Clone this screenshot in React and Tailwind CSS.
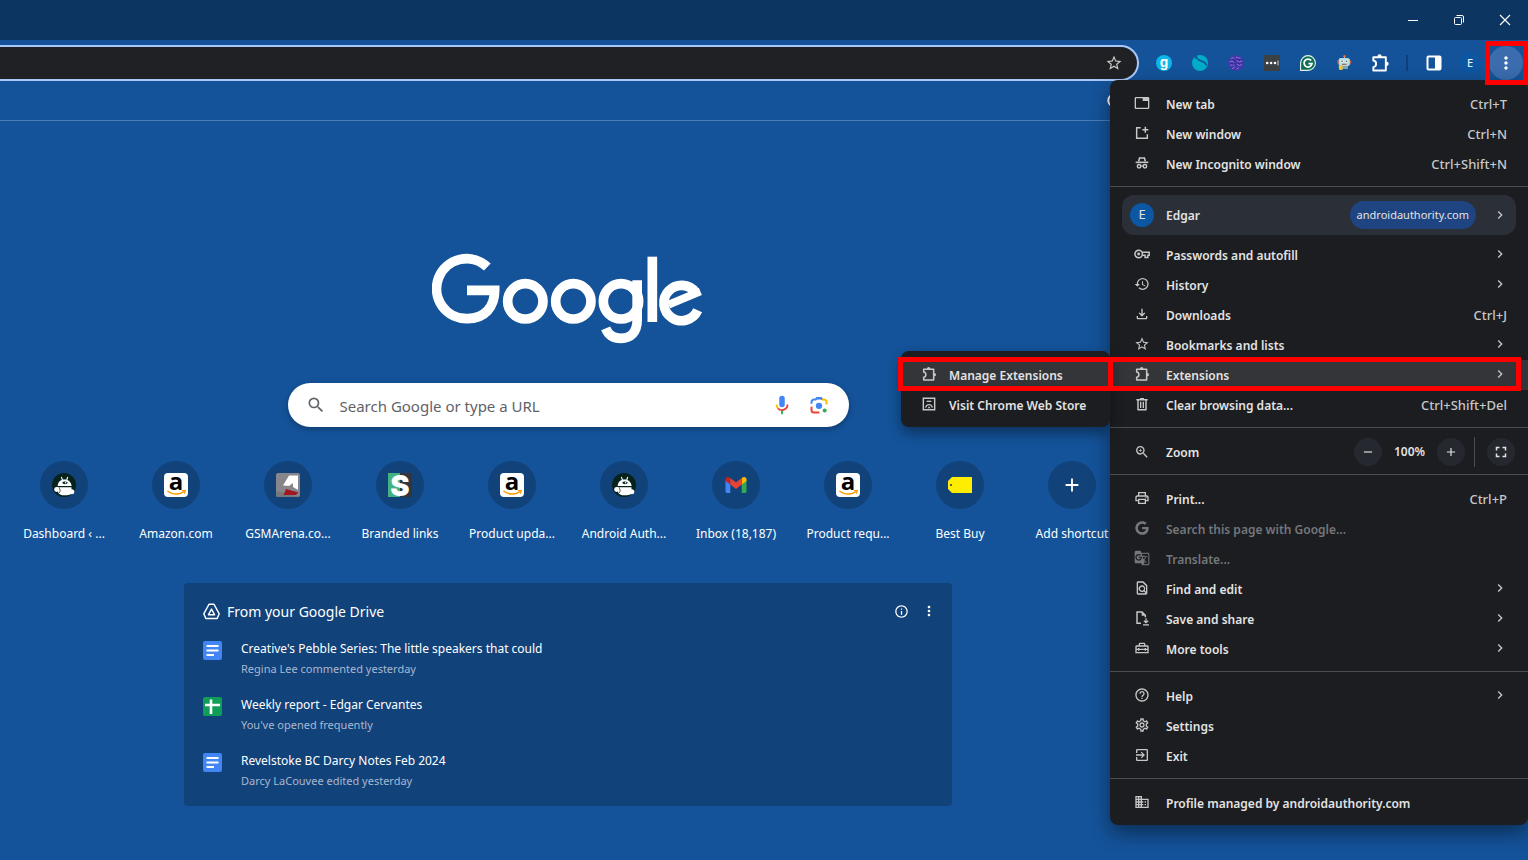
import React from "react";
import {
  MdTab,
  MdHistory,
  MdOutlineFileDownload,
  MdStarBorder,
  MdZoomIn,
  MdOutlinePrint,
  MdGTranslate,
  MdOutlineFindInPage,
  MdOutlineHomeRepairService,
  MdHelpOutline,
  MdOutlineSettings,
  MdExitToApp,
  MdDomain,
  MdChevronRight,
  MdSearch,
  MdMoreVert,
  MdInfoOutline,
  MdFullscreen,
  MdAdd,
  MdRemove,
} from "react-icons/md";
import { FaGoogle } from "react-icons/fa";

/* ---------- icons ---------- */

function Svg({ size = 16, box = "0 0 24 24", children }) {
  return (
    <svg width={size} height={size} viewBox={box} fill="none" aria-hidden="true" className="shrink-0 overflow-visible">
      {children}
    </svg>
  );
}

function Puzzle({ size = 16 }) {
  return (
    <Svg size={size}>
      <path
        d="M4 5H19V21H4V17C6.200 16.700 7.300 15 7.300 13S6.200 9.300 4 9Z"
        stroke="currentColor"
        strokeWidth="2.300"
        strokeLinejoin="round"
      />
      <path d="M9 5V4A2.500 2.500 0 0 1 14 4V5ZM19 10.500H20A2.500 2.500 0 0 1 20 15.500H19Z" fill="currentColor" />
    </Svg>
  );
}

function NewWindow() {
  return (
    <Svg>
      <path d="M10 4H4V20H20V14M17 2.500V11.500M12.500 7H21.500" stroke="currentColor" strokeWidth="2.200" />
    </Svg>
  );
}

function Incognito() {
  return (
    <Svg>
      <path d="M7 9.500 8.300 4.600H15.700L17 9.500" stroke="currentColor" strokeWidth="2.400" />
      <path d="M2.500 11H21.500" stroke="currentColor" strokeWidth="2.400" />
      <circle cx="7.600" cy="17" r="2.600" stroke="currentColor" strokeWidth="2.200" />
      <circle cx="16.400" cy="17" r="2.600" stroke="currentColor" strokeWidth="2.200" />
      <path d="M10.200 16.500H13.800" stroke="currentColor" strokeWidth="1.800" />
    </Svg>
  );
}

function Key() {
  return (
    <Svg>
      <circle cx="7" cy="12" r="5.600" stroke="currentColor" strokeWidth="2.200" />
      <circle cx="7" cy="12" r="2.200" fill="currentColor" />
      <path d="M12.200 9.500H22.800V14H20.800V17.400H16.600V14H12.200" stroke="currentColor" strokeWidth="2.200" />
    </Svg>
  );
}

function Trash() {
  return (
    <Svg>
      <path d="M3.500 5.500H20.500M9 4H15" stroke="currentColor" strokeWidth="2.200" />
      <path d="M6 6V20.500H18V6" stroke="currentColor" strokeWidth="2.200" strokeLinejoin="round" />
      <path d="M10 8.500V18M14 8.500V18" stroke="currentColor" strokeWidth="2" />
    </Svg>
  );
}

function SaveShare() {
  return (
    <Svg>
      <path d="M10.500 20H4.500V3H12L17 8V11" stroke="currentColor" strokeWidth="2.200" />
      <path d="M11.500 3V8.500H17Z" fill="currentColor" />
      <path d="M18 12.500V19M14.800 16.200 18 19.200 21.200 16.200M13.500 22.400H22.500" stroke="currentColor" strokeWidth="1.800" />
    </Svg>
  );
}

function WebStore() {
  return (
    <Svg>
      <path d="M3.500 3.500H20.500V20.500H3.500Z" stroke="currentColor" strokeWidth="2.200" />
      <path d="M8.500 8H15.500" stroke="currentColor" strokeWidth="2" />
      <path d="M7 17.500C7.500 14.500 9 13 12 13S16.500 14.500 17 17.500" stroke="currentColor" strokeWidth="1.800" />
      <path d="M10 18.500 12 15.500 14.500 18.500Z" fill="currentColor" />
    </Svg>
  );
}

function DriveMark() {
  return (
    <Svg size={17} box="1 1 22 22">
      <path
        d="M8.800 2.600H15.200L22 15 19.300 21H4.700L2 15Z"
        stroke="currentColor"
        strokeWidth="1.900"
        strokeLinejoin="round"
      />
      <path d="M12 8.800 16 16.200H8Z" stroke="currentColor" strokeWidth="1.900" strokeLinejoin="round" />
    </Svg>
  );
}

function DocFile() {
  return (
    <Svg size={19} box="0 0 19 19">
      <rect width="19" height="19" rx="2" fill="#4285f4" />
      <path d="M3.500 5H15.500M3.500 9.500H15.500M3.500 14H11" stroke="#fff" strokeWidth="2" />
    </Svg>
  );
}

function SheetFile() {
  return (
    <Svg size={19} box="0 0 19 19">
      <rect width="19" height="19" rx="2" fill="#0f9d58" />
      <path d="M2 8H17M8 2.500V17" stroke="#fff" strokeWidth="2.600" />
    </Svg>
  );
}

function Wordmark() {
  return (
    <svg width="272" height="91" viewBox="36 36 816 273" fill="none" role="img" aria-label="Google">
      <g stroke="#fff" strokeWidth="29">
        <path d="M202 78A90 90 0 1 0 142 233C195 233 224 197 224 148H141" />
        <circle cx="316" cy="181" r="53" />
        <circle cx="460" cy="181" r="53" />
        <circle cx="603" cy="181" r="53" />
        <path d="M651.500 118V236C651.500 274 632 292 603 292C580 292 565 282 557 262" />
        <path d="M697 47V243" />
        <path d="M833 208A53 53 0 1 1 827 154" />
        <path d="M841 151 746 191" strokeWidth="24" />
      </g>
    </svg>
  );
}

function Mic() {
  return (
    <Svg size={22}>
      <rect x="9" y="2" width="6" height="12.500" rx="3" fill="#4285f4" />
      <path d="M6 11.500A6 6 0 0 0 7.800 15.800" stroke="#fbbc04" strokeWidth="2" />
      <path d="M7.600 15.600A6 6 0 0 0 18 11.500" stroke="#ea4335" strokeWidth="2" />
      <path d="M12 18V22" stroke="#34a853" strokeWidth="2" />
    </Svg>
  );
}

function Lens() {
  return (
    <Svg size={20}>
      <path d="M3 10.500V8.500A3 3 0 0 1 6 5.500H8L9.500 3.500H14.500L16 5.500" stroke="#4285f4" strokeWidth="2.400" />
      <path d="M9 3.500H15V5.500H9Z" fill="#4285f4" />
      <path d="M15.500 5.500H18A3 3 0 0 1 21 8.500V11.500" stroke="#fbbc04" strokeWidth="2.400" />
      <path d="M3 14V18A3 3 0 0 0 6 21H12.500" stroke="#ea4335" strokeWidth="2.400" />
      <circle cx="12" cy="13" r="3.800" fill="#4285f4" />
      <circle cx="18.800" cy="18.500" r="2.400" fill="#34a853" />
    </Svg>
  );
}

/* ---------- shortcut favicons ---------- */

function AmazonFav() {
  return (
    <span className="flex size-6 items-center justify-center rounded bg-white">
      <Svg size={24}>
        <text x="12" y="16.500" textAnchor="middle" fontSize="24" fontWeight="700" fontFamily="Open Sans" fill="#000">
          a
        </text>
        <path d="M3.500 18C8.500 21.900 15 21.900 20 18.600" stroke="#ff9900" strokeWidth="1.500" />
        <path d="M18 17.600 21.200 17.600 20.400 20.600" stroke="#ff9900" strokeWidth="1.200" />
      </Svg>
    </span>
  );
}

function AndroidFav() {
  return (
    <Svg size={24}>
      <circle cx="12" cy="12" r="12" fill="#06221b" />
      <path d="M5.600 13C6 8.800 8.500 6.500 12.500 6.500S19 9 19.600 13Z" fill="#fff" />
      <path d="M9.300 4 10.500 7M15.700 4 14.700 7" stroke="#fff" strokeWidth="1.100" />
      <ellipse cx="13" cy="9.800" rx="2.700" ry="1.400" fill="#06221b" />
      <circle cx="13.600" cy="9.800" r=".8" fill="#fff" />
      <path d="M4 14.300H19.500V19C21 22 15 22.300 13 22.300 9 22.300 6.500 21.500 6 19Z" fill="#fff" />
      <circle cx="4.600" cy="16.500" r="2.400" fill="#fff" />
      <circle cx="19.800" cy="18.800" r="2.500" fill="#fff" />
      <path d="M7.300 14.500 8.300 18 7 20" stroke="#06221b" strokeWidth=".7" />
    </Svg>
  );
}

function ArenaFav() {
  return (
    <Svg size={24}>
      <rect width="24" height="24" rx="2" fill="#87878b" />
      <path d="M0 18 24 24H2A2 2 0 0 1 0 22Z" fill="#77777c" />
      <path d="M13 2.500H22V17L17 14V10L13 13 7 12.500Z" fill="#fff" />
      <path d="M10 16 22.500 19.500 20 22H7.500Z" fill="#a11620" />
    </Svg>
  );
}

function BrandFav() {
  return (
    <Svg size={24}>
      <rect width="12" height="24" fill="#45b083" />
      <rect x="12" width="12" height="24" fill="#33373d" />
      <text x="12" y="22.500" textAnchor="middle" fontSize="29" fontWeight="900" fontFamily="Inter" fill="#fff">
        S
      </text>
    </Svg>
  );
}

function GmailFav() {
  return (
    <Svg size={24}>
      <path d="M1.500 7V18.500A1.500 1.500 0 0 0 3 20H6.300V10.500Z" fill="#4285f4" />
      <path d="M22.500 7V18.500A1.500 1.500 0 0 1 21 20H17.700V10.500Z" fill="#34a853" />
      <path d="M1.500 6.500C1.500 4 4 3.300 6.300 5V11.600L1.500 8Z" fill="#c5221f" />
      <path d="M22.500 6.500C22.500 4 20 3.300 17.700 5V11.600L22.500 8Z" fill="#fbbc04" />
      <path d="M6.300 5 12 9.400 17.700 5V11.600L12 15.900 6.300 11.600Z" fill="#ea4335" />
    </Svg>
  );
}

function TagFav() {
  return (
    <Svg size={24}>
      <path d="M4 4H24V20H4L0 16V8Z" fill="#ffed00" />
      <circle cx="3" cy="12" r="1" fill="#11396a" />
    </Svg>
  );
}

/* ---------- window chrome ---------- */

function WindowControls() {
  const cls = "flex h-10 w-[46px] items-center justify-center";
  return (
    <header className="flex h-10 justify-end bg-[#0c3561] text-white">
      <button aria-label="Minimize" className={cls}>
        <Svg size={12} box="0 0 12 12">
          <path d="M1 6.500H11" stroke="currentColor" />
        </Svg>
      </button>
      <button aria-label="Restore" className={cls}>
        <Svg size={12} box="0 0 12 12">
          <rect x="1.500" y="3.500" width="7" height="7" rx="1" stroke="currentColor" />
          <path d="M3.500 1.500H9A1.500 1.500 0 0 1 10.500 3V8.500" stroke="currentColor" />
        </Svg>
      </button>
      <button aria-label="Close" className={cls}>
        <Svg size={12} box="0 0 12 12">
          <path d="M1 1 11 11M11 1 1 11" stroke="currentColor" strokeWidth="1.100" />
        </Svg>
      </button>
    </header>
  );
}

function ToolButton({ label, children }) {
  return (
    <button aria-label={label} className="flex h-9 w-9 shrink-0 items-center justify-center text-white">
      {children}
    </button>
  );
}

function Toolbar() {
  return (
    <div className="flex h-[46px] items-center pr-1">
      <div className="mr-[7px] flex h-9 min-w-0 flex-1 items-center rounded-r-full border-2 border-l-0 border-[#a8c7fa] bg-[#202124] pr-[14px]">
        <input aria-label="Address" className="h-full min-w-0 flex-1 bg-transparent px-4 text-white outline-none" />
        <button aria-label="Bookmark this tab" className="text-[#c7c7c7]">
          <MdStarBorder size={18} />
        </button>
      </div>
      <ToolButton label="Goodlinks">
        <Svg size={16} box="0 0 16 16">
          <circle cx="8" cy="8" r="8" fill="#0cb5ea" />
          <text x="8" y="11.500" textAnchor="middle" fontSize="14" fontWeight="700" fontFamily="Liberation Sans" fill="#fff">
            g
          </text>
        </Svg>
      </ToolButton>
      <ToolButton label="Surf">
        <Svg size={16} box="0 0 16 16">
          <circle cx="8" cy="8" r="8" fill="#00acc8" />
          <path d="M4.300 -1C3.500 4.500 7.500 5.500 10 6.200S14 8.500 14.500 10.500" stroke="#14539a" strokeWidth="1.600" />
          <path d="M2 0H4.500V3L3 4Z" fill="#14539a" />
        </Svg>
      </ToolButton>
      <ToolButton label="Orb">
        <Svg size={16} box="0 0 16 16">
          <circle cx="8" cy="8" r="7.800" fill="#4635a8" />
          <path
            d="M3 3.500 5 2.500 6.500 4M8 2 10.500 3 12.500 3M1.500 7 4 6 6 7.500M8.500 5.500 11 7 14 6M2 10.500 4.500 9.500 6.500 11M9 9 11.500 10.500 14 9.500M4 13.500 6.500 12.500M8.500 14.200 11 12.500"
            stroke="#8678e4"
            strokeWidth="1"
          />
          <path d="M5 4.500 7 6M10 4.500 12 5.500M3 8.500 5 9M9.500 8 11.500 8.800" stroke="#2a1c78" strokeWidth="1" />
        </Svg>
      </ToolButton>
      <ToolButton label="Passwords">
        <Svg size={16} box="0 0 16 16">
          <rect width="16" height="16" fill="#3c4146" />
          <circle cx="3.200" cy="8" r="1.300" fill="#fff" />
          <circle cx="7.100" cy="8" r="1.300" fill="#fff" />
          <circle cx="11" cy="8" r="1.300" fill="#fff" />
          <path d="M14 5.500V10.500" stroke="#ccc" />
        </Svg>
      </ToolButton>
      <ToolButton label="Writing check">
        <Svg size={16} box="0 0 16 16">
          <path d="M.6 15.400V8A7.400 7.400 0 1 1 8 15.400Z" fill="#0e6f54" stroke="#e8f2ee" strokeWidth="1.100" />
          <path d="M11.200 5.600A4 4 0 1 0 12 8.700H8.500" stroke="#fff" strokeWidth="1.700" />
        </Svg>
      </ToolButton>
      <ToolButton label="Robot">
        <Svg size={16} box="0 0 16 16">
          <path d="M8.500 1V4" stroke="#ddd" />
          <circle cx="8.500" cy="1.300" r="1.200" fill="#e8703a" />
          <rect x="2.500" y="3" width="11.500" height="8" rx="2.500" fill="#b4dadc" />
          <circle cx="6" cy="6.300" r="1.700" fill="#f2fafa" />
          <circle cx="10.500" cy="6.300" r="1.700" fill="#f2fafa" />
          <circle cx="6" cy="6.300" r=".8" fill="#345" />
          <circle cx="10.500" cy="6.300" r=".8" fill="#345" />
          <path d="M6 9.300H10.500" stroke="#a54b4b" />
          <path d="M6 11H12V14H6Z" fill="#7fa9b2" />
          <path d="M2.800 10.500H6.500V15H3.500L2.800 13Z" fill="#f5c63c" />
          <rect x="1.300" y="5.500" width="1.400" height="3" fill="#d9603a" />
          <rect x="13.800" y="5.500" width="1.400" height="3" fill="#d9603a" />
        </Svg>
      </ToolButton>
      <ToolButton label="Extensions">
        <Puzzle size={20} />
      </ToolButton>
      <span className="flex w-[18px] justify-center">
        <span className="h-4 w-0.5 bg-[#0f3f7a]" />
      </span>
      <ToolButton label="Side panel">
        <Svg size={16} box="0 0 16 16">
          <rect x="1.500" y="1.500" width="13" height="13" rx="1" stroke="#fff" strokeWidth="2" />
          <rect x="9" y="1.500" width="5.500" height="13" fill="#fff" />
        </Svg>
      </ToolButton>
      <ToolButton label="Profile">
        <span className="flex size-5 items-center justify-center rounded-full bg-[#0b57a4] text-[11px]">E</span>
      </ToolButton>
      <div className="relative flex h-9 w-9 items-center justify-center">
        <button
          aria-label="Customize and control"
          className="flex size-[34px] items-center justify-center rounded-full bg-[#3a6cae] text-white"
        >
          <MdMoreVert size={20} />
        </button>
        <span className="pointer-events-none absolute -top-1 -right-1 -bottom-1 -left-[3px] z-20 border-5 border-[#fe0000]" />
      </div>
    </div>
  );
}

/* ---------- main menu ---------- */

function Row({ icon, label, shortcut, arrow, disabled, active, compact }) {
  return (
    <button
      role="menuitem"
      disabled={disabled}
      className={[
        "flex h-[30px] w-full items-center pb-0.5 text-left",
        compact ? "gap-3 px-5" : arrow ? "gap-4 pr-5 pl-6" : "gap-4 pr-[21px] pl-6",
        active ? "bg-[#333539]" : "",
        disabled ? "text-[#75777a]" : "text-[#e3e3e3]",
      ].join(" ")}
    >
      <span className={disabled ? "shrink-0" : "shrink-0 text-[#c7c7c7]"}>{icon}</span>
      <span className="flex-1 pt-1 text-[12px] font-semibold whitespace-nowrap">{label}</span>
      {shortcut && <span className="pt-1 text-[13px] font-medium text-[#c7c7c7]">{shortcut}</span>}
      {arrow && <MdChevronRight size={16} className="text-[#c7c7c7]" />}
    </button>
  );
}

function Section({ children, last }) {
  return <div className={last ? "pt-[9px] pb-[7px]" : "border-b border-[#4a4d52] pt-[9px] pb-[7px]"}>{children}</div>;
}

function ChromeMenu() {
  const round = "flex size-7 shrink-0 items-center justify-center rounded-full bg-[#25282e] text-[#e3e3e3]";
  return (
    <div
      role="menu"
      aria-label="Browser menu"
      className="absolute top-20 right-0 z-10 w-[418px] rounded-lg bg-[#1b1d21] shadow-[0_8px_20px_rgba(0,0,0,0.45)]"
    >
      <Section>
        <Row icon={<MdTab size={16} />} label="New tab" shortcut="Ctrl+T" />
        <Row icon={<NewWindow />} label="New window" shortcut="Ctrl+N" />
        <Row icon={<Incognito />} label="New Incognito window" shortcut="Ctrl+Shift+N" />
      </Section>

      <div className="border-b border-[#4a4d52] pt-2 pb-[7px]">
        <div className="mb-[5px] px-3">
          <button
            role="menuitem"
            className="flex h-10 w-full items-center rounded-xl bg-[#2b2f37] px-2 text-left text-[#e3e3e3]"
          >
            <span className="mr-3 flex size-6 items-center justify-center rounded-full bg-[#0b57a4] text-[13px]">E</span>
            <span className="flex-1 pt-0.5 text-[12px] font-semibold">Edgar</span>
            <span className="mr-4 flex h-7 items-center rounded-full bg-[#1f4482] px-[7px] text-[11px]">
              androidauthority.com
            </span>
            <MdChevronRight size={16} className="text-[#c7c7c7]" />
          </button>
        </div>
        <Row icon={<Key />} label="Passwords and autofill" arrow />
        <Row icon={<MdHistory size={16} />} label="History" arrow />
        <Row icon={<MdOutlineFileDownload size={16} />} label="Downloads" shortcut="Ctrl+J" />
        <Row icon={<MdStarBorder size={16} />} label="Bookmarks and lists" arrow />
        <div className="relative">
          <Row icon={<Puzzle />} label="Extensions" arrow active />
          <div
            role="menu"
            aria-label="Extensions"
            className="absolute -top-[9px] right-full w-[209px] rounded-lg bg-[#1b1d21] pt-[9px] pb-[7px] shadow-[0_6px_14px_rgba(0,0,0,0.4)]"
          >
            <div className="relative">
              <Row icon={<Puzzle />} label="Manage Extensions" active compact />
              <span className="pointer-events-none absolute -top-[3px] -right-[3px] -bottom-px -left-[3px] border-5 border-[#fe0000]" />
            </div>
            <Row icon={<WebStore />} label="Visit Chrome Web Store" compact />
          </div>
          <span className="pointer-events-none absolute -top-[3px] right-[7px] -bottom-px -left-[2px] border-5 border-[#fe0000]" />
        </div>
        <Row icon={<Trash />} label="Clear browsing data..." shortcut="Ctrl+Shift+Del" />
      </div>

      <Section>
        <div className="flex h-[30px] items-center pr-[13px] pl-6 text-[#e3e3e3]">
          <MdZoomIn size={16} className="mr-4 text-[#c7c7c7]" />
          <span className="flex-1 pt-0.5 text-[12px] font-semibold">Zoom</span>
          <button aria-label="Zoom out" className={round}>
            <MdRemove size={14} />
          </button>
          <span className="w-[55px] text-center text-[12px] font-semibold">100%</span>
          <button aria-label="Zoom in" className={round}>
            <MdAdd size={14} />
          </button>
          <span className="mr-3 ml-[9px] h-[30px] w-px bg-[#4a4d52]" />
          <button aria-label="Full screen" className={round}>
            <MdFullscreen size={18} />
          </button>
        </div>
      </Section>

      <Section>
        <Row icon={<MdOutlinePrint size={16} />} label="Print..." shortcut="Ctrl+P" />
        <Row icon={<FaGoogle size={14} className="mx-px" />} label="Search this page with Google..." disabled />
        <Row icon={<MdGTranslate size={16} />} label="Translate..." disabled />
        <Row icon={<MdOutlineFindInPage size={16} />} label="Find and edit" arrow />
        <Row icon={<SaveShare />} label="Save and share" arrow />
        <Row icon={<MdOutlineHomeRepairService size={16} />} label="More tools" arrow />
      </Section>

      <Section>
        <Row icon={<MdHelpOutline size={16} />} label="Help" arrow />
        <Row icon={<MdOutlineSettings size={16} />} label="Settings" />
        <Row icon={<MdExitToApp size={16} />} label="Exit" />
      </Section>

      <Section last>
        <Row icon={<MdDomain size={16} />} label="Profile managed by androidauthority.com" />
      </Section>
    </div>
  );
}

/* ---------- new tab page ---------- */

const SHORTCUTS = [
  { label: "Dashboard ‹ ...", icon: <AndroidFav /> },
  { label: "Amazon.com", icon: <AmazonFav /> },
  { label: "GSMArena.co...", icon: <ArenaFav /> },
  { label: "Branded links", icon: <BrandFav /> },
  { label: "Product upda...", icon: <AmazonFav /> },
  { label: "Android Auth...", icon: <AndroidFav /> },
  { label: "Inbox (18,187)", icon: <GmailFav /> },
  { label: "Product requ...", icon: <AmazonFav /> },
  { label: "Best Buy", icon: <TagFav /> },
  { label: "Add shortcut", icon: <MdAdd size={22} /> },
];

const FILES = [
  {
    icon: <DocFile />,
    title: "Creative's Pebble Series: The little speakers that could",
    note: "Regina Lee commented yesterday",
  },
  { icon: <SheetFile />, title: "Weekly report - Edgar Cervantes", note: "You've opened frequently" },
  { icon: <DocFile />, title: "Revelstoke BC Darcy Notes Feb 2024", note: "Darcy LaCouvee edited yesterday" },
];

function SearchBox() {
  return (
    <form className="mt-[39px] flex h-11 w-[561px] items-center rounded-full bg-white pr-5 pl-[18px] shadow-[0_2px_6px_rgba(0,0,0,0.3)]">
      <MdSearch size={20} className="mr-[14px] text-[#5f6368]" />
      <input
        type="text"
        aria-label="Search"
        placeholder="Search Google or type a URL"
        className="h-full min-w-0 flex-1 pt-0.5 text-[15px] text-[#5f6368] outline-none placeholder:text-[#5f6368]"
      />
      <button type="button" aria-label="Search by voice" className="mr-4">
        <Mic />
      </button>
      <button type="button" aria-label="Search by image">
        <Lens />
      </button>
    </form>
  );
}

function DriveCard() {
  return (
    <section className="mt-[39px] w-[768px] rounded bg-[#11427a] pt-4 pr-[15px] pb-[7px] pl-[19px]">
      <div className="flex h-6 items-center">
        <DriveMark />
        <h2 className="ml-[7px] flex-1 text-[14px]">From your Google Drive</h2>
        <button aria-label="Information" className="mr-3">
          <MdInfoOutline size={15} />
        </button>
        <button aria-label="More options">
          <MdMoreVert size={16} />
        </button>
      </div>
      <ul className="mt-2">
        {FILES.map((f) => (
          <li key={f.title}>
            <a href="#" className="flex h-14 items-start gap-[19px] pt-2">
              <span className="mt-0.5">{f.icon}</span>
              <span className="flex flex-col">
                <span className="text-[12px] leading-5">{f.title}</span>
                <span className="text-[11px] leading-5 text-[#a9b8d0]">{f.note}</span>
              </span>
            </a>
          </li>
        ))}
      </ul>
    </section>
  );
}

export default function App() {
  return (
    <div className="relative min-h-screen overflow-hidden bg-[#14539a] font-['Noto_Sans','Open_Sans',sans-serif] text-white">
      <WindowControls />
      <Toolbar />
      <div className="flex h-[35px] items-start justify-end border-b border-[#4c7db5] pt-[7px] pr-[406px]">
        <Svg size={15}>
          <circle cx="12" cy="12" r="10" stroke="#fff" strokeWidth="3" />
        </Svg>
      </div>
      <main className="flex flex-col items-center pt-[132px] pr-[392px] pb-10">
        <Wordmark />
        <SearchBox />
        <nav aria-label="Shortcuts" className="mt-[34px] flex">
          {SHORTCUTS.map((s, i) => (
            <a key={i} href="#" className="flex w-28 flex-col items-center gap-[15px]">
              <span className="flex size-12 items-center justify-center rounded-full bg-[#11427a]">{s.icon}</span>
              <span className="text-[12px] leading-5 whitespace-nowrap">{s.label}</span>
            </a>
          ))}
        </nav>
        <DriveCard />
      </main>
      <ChromeMenu />
    </div>
  );
}
